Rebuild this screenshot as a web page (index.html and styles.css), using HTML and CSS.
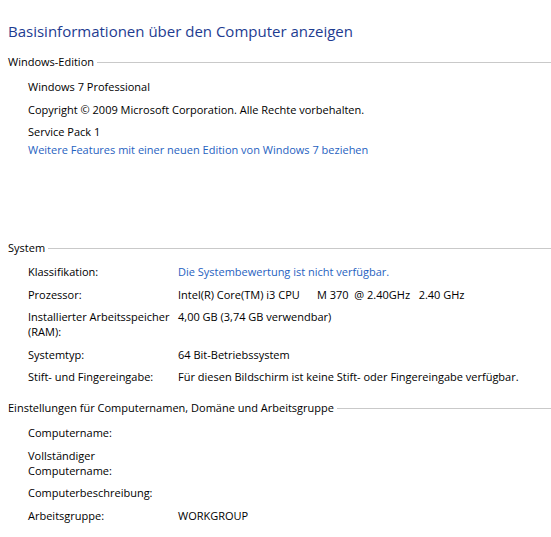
FILE: index.html
```html
<!DOCTYPE html>
<html lang="de">
<head>
<meta charset="utf-8">
<link rel="stylesheet" href="styles.css">
</head>
<body>
<main class="page">
  <h1 class="title">Basisinformationen über den Computer anzeigen</h1>

  <section class="group group-edition">
    <div class="group-head"><span class="group-label">Windows-Edition</span><span class="rule"></span></div>
    <div class="edition-list">
      <p class="line">Windows 7 Professional</p>
      <p class="line">Copyright © 2009 Microsoft Corporation. Alle Rechte vorbehalten.</p>
      <div class="sp">
        <p class="line">Service Pack 1</p>
        <p class="line link">Weitere Features mit einer neuen Edition von Windows 7 beziehen</p>
      </div>
    </div>
  </section>

  <section class="group group-system">
    <div class="group-head"><span class="group-label">System</span><span class="rule"></span></div>
    <div class="props">
      <div class="k">Klassifikation:</div><div class="v link">Die Systembewertung ist nicht verfügbar.</div>
      <div class="k">Prozessor:</div><div class="v pre">Intel(R) Core(TM) i3 CPU      M 370  @ 2.40GHz   2.40 GHz</div>
      <div class="k">Installierter Arbeitsspeicher<br>(RAM):</div><div class="v">4,00 GB (3,74 GB verwendbar)</div>
      <div class="k">Systemtyp:</div><div class="v">64 Bit-Betriebssystem</div>
      <div class="k">Stift- und Fingereingabe:</div><div class="v">Für diesen Bildschirm ist keine Stift- oder Fingereingabe verfügbar.</div>
    </div>
  </section>

  <section class="group group-name">
    <div class="group-head"><span class="group-label">Einstellungen für Computernamen, Domäne und Arbeitsgruppe</span><span class="rule"></span></div>
    <div class="props">
      <div class="k">Computername:</div><div class="v"></div>
      <div class="k">Vollständiger<br>Computername:</div><div class="v"></div>
      <div class="k">Computerbeschreibung:</div><div class="v"></div>
      <div class="k">Arbeitsgruppe:</div><div class="v">WORKGROUP</div>
    </div>
  </section>
</main>
</body>
</html>
```

FILE: styles.css
```css
html, body {
  margin: 0;
  padding: 0;
  background: #ffffff;
}

body {
  font-family: "Open Sans", "Noto Sans", sans-serif;
  font-size: 11px;
  line-height: 15px;
  color: #000000;
}

.page {
  padding: 21px 0 0 8px;
}

.title {
  margin: 0;
  font-size: 15px;
  line-height: 20px;
  font-weight: normal;
  color: #1e3c91;
}

.group-head {
  display: flex;
  align-items: center;
  gap: 3px;
}

.group-label {
  white-space: nowrap;
}

.rule {
  flex: 1;
  height: 0;
  border-top: 1px solid #c9c9c9;
  margin-top: 2px;
}

.group-edition {
  margin-top: 13px;
}

.edition-list {
  margin: 10px 0 0 20px;
  display: flex;
  flex-direction: column;
  gap: 7.5px;
}

.sp {
  display: flex;
  flex-direction: column;
  gap: 3px;
}

.line {
  margin: 0;
}

.link {
  color: #1f62bf;
}

.group-system {
  margin-top: 83px;
}

.group-name {
  margin-top: 16px;
}

.props {
  margin: 9px 0 0 20px;
  display: grid;
  grid-template-columns: 150px 1fr;
  row-gap: 7.5px;
}

.group-name .props {
  margin-top: 10px;
}

.v.pre {
  white-space: pre;
}
```
